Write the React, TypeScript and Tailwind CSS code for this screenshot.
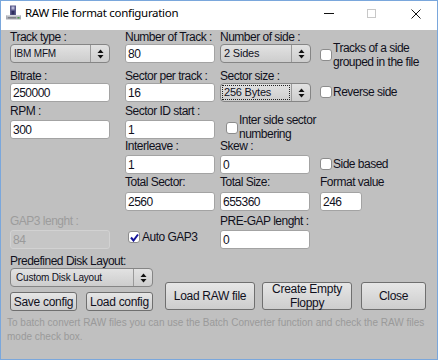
import React from "react";

const ui = "font-['Liberation_Sans',Arial,sans-serif]";

function Label({ children, h, disabled }: { children: React.ReactNode; h: string; disabled?: boolean }) {
  return (
    <div
      className={`${h} text-[12px] leading-[14px] tracking-[-0.5px] whitespace-nowrap ${
        disabled ? "text-[#9c9c9c]" : "text-[#10101c]"
      }`}
    >
      {children}
    </div>
  );
}

function Input({ value, w, disabled }: { value: string; w: string; disabled?: boolean }) {
  return (
    <div
      className={`${w} h-[19px] rounded-[3px] border flex items-center pl-[2px] text-[12px] tracking-[-0.5px] ${
        disabled ? "bg-[#c6c6c6] border-[#d2d2d2] text-[#9a9a9a]" : "bg-white border-[#a3a3a3] text-[#10101c]"
      }`}
    >
      {value}
    </div>
  );
}

function Arrows() {
  return (
    <svg width="7" height="10" viewBox="0 0 7 10">
      <path d="M3.5 0.5 L6.5 4 L0.5 4 Z" fill="#111" />
      <path d="M0.5 6 L6.5 6 L3.5 9.5 Z" fill="#111" />
    </svg>
  );
}

function Select({ text, w, focus, pl, size }: { text: string; w: string; focus?: boolean; pl: string; size: string }) {
  return (
    <div
      className={`${w} h-[19px] flex rounded-[4px] border border-[#858585] bg-gradient-to-b from-[#e2e2e2] to-[#cdcdcd] text-[#10101c]`}
    >
      <div className="flex-1 flex p-[1px]">
        <div
          className={`flex-1 flex items-center ${pl} ${size} tracking-[-0.2px] whitespace-nowrap ${
            focus ? "border border-dotted border-[#222]" : "border border-transparent"
          }`}
        >
          {text}
        </div>
      </div>
      <div className="w-[19px] border-l border-[#9a9a9a] flex items-center justify-center">
        <Arrows />
      </div>
    </div>
  );
}

function Check({ checked }: { checked?: boolean }) {
  return (
    <span className="w-[12px] h-[12px] rounded-[3px] border border-[#8c8c8c] bg-white flex items-center justify-center shrink-0">
      {checked && (
        <svg width="9" height="9" viewBox="0 0 9 9">
          <path d="M1 4.5 L3.5 7.5 L8 1.5" stroke="#14149a" strokeWidth="2" fill="none" />
        </svg>
      )}
    </span>
  );
}

function Btn({ children, w, h }: { children: React.ReactNode; w: string; h: string }) {
  return (
    <div
      className={`${w} ${h} rounded-[3px] border border-[#6f6f6f] bg-gradient-to-b from-[#e6e6e6] to-[#cdcdcd] flex items-center justify-center text-center text-[12px] leading-[14px] tracking-[-0.3px] text-[#10101c]`}
    >
      {children}
    </div>
  );
}

function AppIcon() {
  return (
    <svg width="17" height="16" viewBox="0 0 17 16">
      <rect x="5" y="0.5" width="6" height="10" fill="#5a5a8a" />
      <rect x="6.5" y="1.5" width="3" height="3" fill="#b8b8d8" />
      <rect x="6.5" y="6" width="3" height="3.5" fill="#2e2e5e" />
      <path d="M1 10 L16 10 L16 14.5 L1 14.5 Z" fill="#a9abb3" />
      <path d="M1 10 L16 10 L15 11.5 L2 11.5 Z" fill="#d4d6dc" />
      <rect x="3" y="12.3" width="8" height="1" fill="#6d6f77" />
      <rect x="12.5" y="12" width="2" height="1.5" fill="#4a9a4a" />
    </svg>
  );
}

export default function App() {
  return (
    <div className={`w-[438px] h-[360px] flex flex-col border border-[#7aa7dc] bg-white ${ui}`}>
      {/* Title bar */}
      <div className="h-[29px] flex items-start shrink-0 bg-white">
        <div className="pl-[4px] pt-[4px]">
          <AppIcon />
        </div>
        <div className="pl-[3px] pt-[4px] font-['Noto_Sans',sans-serif] text-[11.5px] leading-[16px] tracking-[-0.3px] text-black">
          RAW File format configuration
        </div>
        <div className="ml-auto flex items-start pt-[7px] mr-[16px]">
          <div className="mt-[5px] w-[10px] h-[1px] bg-[#111]" />
          <div className="ml-[33px] w-[9px] h-[9px] border border-[#c8c8c8] mt-[1px]" />
          <svg className="ml-[35px] mt-[1px]" width="10" height="10" viewBox="0 0 10 10">
            <path d="M0.5 0.5 L9.5 9.5 M9.5 0.5 L0.5 9.5" stroke="#111" strokeWidth="1" />
          </svg>
        </div>
      </div>

      {/* Body */}
      <div className="flex-1 bg-[#c0c0c0] flex flex-col">
        <div className="pl-[9px]">
          <div className="grid grid-cols-[115px_95px_100px_1fr] grid-rows-[39px_35px_35px_36px_39px_40px]">
            {/* Row A */}
            <div>
              <Label h="h-[14px]">Track type :</Label>
              <Select text="IBM MFM" w="w-[100px]" pl="pl-[1px]" size="text-[10px]" />
            </div>
            <div>
              <Label h="h-[14px]">Number of Track :</Label>
              <Input value="80" w="w-[90px]" />
            </div>
            <div>
              <Label h="h-[14px]">Number of side :</Label>
              <Select text="2 Sides" w="w-[91px]" pl="pl-[1px]" size="text-[11px]" />
            </div>
            <div className="pt-[10px] flex items-center">
              <Check />
              <div className="ml-[1px] text-[12px] leading-[14px] tracking-[-0.5px] text-[#10101c] whitespace-nowrap">
                Tracks of a side
                <br />
                grouped in the file
              </div>
            </div>

            {/* Row B */}
            <div>
              <Label h="h-[14px]">Bitrate :</Label>
              <Input value="250000" w="w-[100px]" />
            </div>
            <div>
              <Label h="h-[14px]">Sector per track :</Label>
              <Input value="16" w="w-[90px]" />
            </div>
            <div>
              <Label h="h-[14px]">Sector size :</Label>
              <Select text="256 Bytes" w="w-[91px]" focus pl="pl-[1px]" size="text-[11px]" />
            </div>
            <div className="pt-[16px] flex items-start">
              <div className="flex items-center">
                <Check />
                <div className="ml-[1px] text-[12px] leading-[14px] tracking-[-0.5px] text-[#10101c] whitespace-nowrap">
                  Reverse side
                </div>
              </div>
            </div>

            {/* Row C */}
            <div>
              <Label h="h-[16px]">RPM :</Label>
              <Input value="300" w="w-[100px]" />
            </div>
            <div>
              <Label h="h-[16px]">Sector ID start :</Label>
              <Input value="1" w="w-[90px]" />
            </div>
            <div className="pt-[10px] pl-[6px] flex items-start">
              <div className="flex items-center">
                <Check />
                <div className="ml-[1px] text-[12px] leading-[13.5px] tracking-[-0.5px] text-[#10101c] whitespace-nowrap">
                  Inter side sector
                  <br />
                  numbering
                </div>
              </div>
            </div>
            <div />

            {/* Row D */}
            <div />
            <div>
              <Label h="h-[16px]">Interleave :</Label>
              <Input value="1" w="w-[90px]" />
            </div>
            <div>
              <Label h="h-[16px]">Skew :</Label>
              <Input value="0" w="w-[90px]" />
            </div>
            <div className="pt-[18px] flex items-start">
              <div className="flex items-center">
                <Check />
                <div className="ml-[1px] text-[12px] leading-[14px] tracking-[-0.5px] text-[#10101c] whitespace-nowrap">
                  Side based
                </div>
              </div>
            </div>

            {/* Row E */}
            <div />
            <div>
              <Label h="h-[17px]">Total Sector:</Label>
              <Input value="2560" w="w-[90px]" />
            </div>
            <div>
              <Label h="h-[17px]">Total Size:</Label>
              <Input value="655360" w="w-[90px]" />
            </div>
            <div>
              <Label h="h-[17px]">Format value</Label>
              <Input value="246" w="w-[42px]" />
            </div>

            {/* Row F */}
            <div>
              <Label h="h-[16px]" disabled>
                GAP3 lenght :
              </Label>
              <Input value="84" w="w-[100px]" disabled />
            </div>
            <div className="pt-[16px] pl-[3px] flex items-start">
              <div className="flex items-center">
                <Check checked />
                <div className="ml-[2px] text-[12px] leading-[14px] tracking-[-0.5px] text-[#10101c] whitespace-nowrap">
                  Auto GAP3
                </div>
              </div>
            </div>
            <div>
              <Label h="h-[16px]">PRE-GAP lenght :</Label>
              <Input value="0" w="w-[90px]" />
            </div>
            <div />
          </div>

          {/* Lower section */}
          <div className="flex items-start">
            <div className="w-[143px] flex flex-col">
              <Label h="h-[14px]">Predefined Disk Layout:</Label>
              <Select text="Custom Disk Layout" w="w-[143px]" pl="pl-[3px]" size="text-[10px]" />
              <div className="mt-[5px] flex gap-[9px]">
                <Btn w="w-[67px]" h="h-[19px]">Save config</Btn>
                <Btn w="w-[67px]" h="h-[19px]">Load config</Btn>
              </div>
            </div>
            <div className="ml-[12px] mt-[28px] flex">
              <Btn w="w-[90px]" h="h-[28px]">Load RAW file</Btn>
              <Btn w="w-[90px]" h="h-[28px] ml-[7px]">
                Create Empty
                <br />
                Floppy
              </Btn>
              <Btn w="w-[65px]" h="h-[28px] ml-[9px]">Close</Btn>
            </div>
          </div>
        </div>

        <div className="pl-[6px] mt-[5px] text-[10px] leading-[13.5px] text-[#9a9a9a]">
          <span className="whitespace-nowrap">
            To batch convert RAW files you can use the Batch Converter function and check the RAW files
          </span>
          <br />
          mode check box.
        </div>
      </div>
    </div>
  );
}
